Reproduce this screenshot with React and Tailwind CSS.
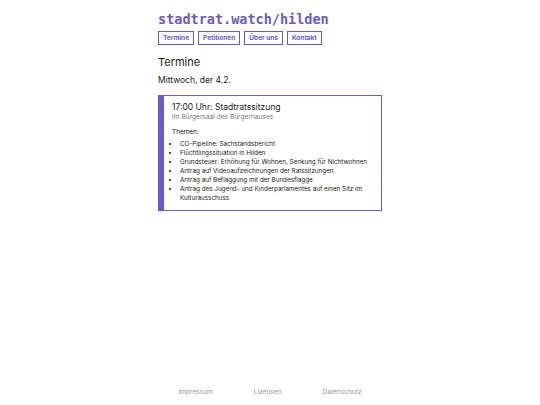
import React from 'react';

const navItems = ['Termine', 'Petitionen', 'Über uns', 'Kontakt'];

const topics = [
  'CO-Pipeline: Sachstandsbericht',
  'Flüchtlingssituation in Hilden',
  'Grundsteuer: Erhöhung für Wohnen, Senkung für Nichtwohnen',
  'Antrag auf Videoaufzeichnungen der Ratssitzungen',
  'Antrag auf Beflaggung mit der Bundesflagge',
  'Antrag des Jugend- und Kinderparlamentes auf einen Sitz im Kulturausschuss',
];

const App = () => {
  return (
    <div
      className="min-h-[405px] flex flex-col bg-white text-[#1a1a1a]"
      style={{ fontFamily: 'Inter, "Liberation Sans", sans-serif' }}
    >
      <div className="w-[224px] mx-auto flex-1 pt-[10px]">
        <h1
          className="text-[13.5px] leading-[18px] font-bold text-[#6a5acd]"
          style={{ fontFamily: '"DejaVu Sans Mono", "Liberation Mono", monospace' }}
        >
          stadtrat.watch/hilden
        </h1>
        <nav className="flex gap-[4px] mt-[3px]">
          {navItems.map((item) => (
            <a
              key={item}
              href="#"
              className="border-[1.5px] border-[#6a5acd] text-[#6a5acd] text-[6.5px] font-bold px-[4px] leading-[12px]"
            >
              {item}
            </a>
          ))}
        </nav>

        <h2 className="text-[11px] leading-[14px] mt-[10px]">Termine</h2>
        <p className="text-[8.5px] leading-[12px] mt-[5px]">Mittwoch, der 4.2.</p>

        <div className="mt-[9px] border border-[#6a5acd] border-l-[6px] pl-[8px] pr-[6px] pt-[6px] pb-[7px]">
          <div className="text-[8.5px] leading-[11px]">17:00 Uhr: Stadtratssitzung</div>
          <div className="text-[6.6px] leading-[9px] text-[#777]">Im Bürgersaal des Bürgerhauses</div>
          <div className="text-[6.4px] leading-[9px] mt-[6px]">Themen:</div>
          <ul className="list-disc pl-[8px] mt-[3px] text-[6.3px] leading-[9px]">
            {topics.map((t) => (
              <li key={t}>{t}</li>
            ))}
          </ul>
        </div>
      </div>

      <footer className="w-[224px] mx-auto flex justify-around pb-[7px] text-[6.6px] text-[#999]">
        <a href="#">Impressum</a>
        <a href="#">Lizensen</a>
        <a href="#">Datenschutz</a>
      </footer>
    </div>
  );
};

export default App;
